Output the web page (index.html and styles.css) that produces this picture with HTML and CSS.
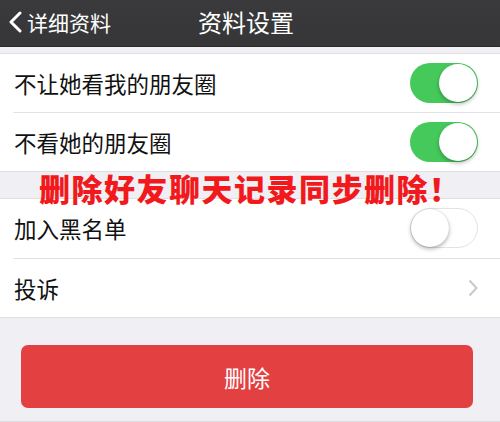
FILE: index.html
```html
<!DOCTYPE html>
<html lang="zh">
<head>
<meta charset="utf-8">
<link rel="stylesheet" href="styles.css">
</head>
<body>
<div class="page">
  <header class="nav">
    <div class="back">
      <svg class="back-icon" width="14" height="22" viewBox="0 0 14 22"><path d="M12 2 L3 11 L12 20" fill="none" stroke="#fff" stroke-width="3" stroke-linecap="round" stroke-linejoin="round"/></svg>
      <span>详细资料</span>
    </div>
    <div class="title">资料设置</div>
  </header>

  <div class="spacer-top"></div>

  <section class="group">
    <div class="row">
      <span class="label">不让她看我的朋友圈</span>
      <span class="switch on"><span class="knob"></span></span>
    </div>
    <div class="sep"></div>
    <div class="row">
      <span class="label">不看她的朋友圈</span>
      <span class="switch on"><span class="knob"></span></span>
    </div>
  </section>

  <div class="spacer-mid">
    <div class="overlay">删除好友聊天记录同步删除！</div>
  </div>

  <section class="group">
    <div class="row row2">
      <span class="label">加入黑名单</span>
      <span class="switch off"><span class="knob"></span></span>
    </div>
    <div class="sep"></div>
    <div class="row row2">
      <span class="label">投诉</span>
      <svg class="chev" width="10" height="18" viewBox="0 0 10 18"><path d="M1.5 1.5 L8.5 9 L1.5 16.5" fill="none" stroke="#c7c7cc" stroke-width="2"/></svg>
    </div>
  </section>

  <div class="bottom">
    <button class="delete">删除</button>
  </div>
</div>
</body>
</html>
```

FILE: styles.css
```css
html, body {
  margin: 0;
  padding: 0;
  background: #efeff4;
  font-family: "Noto Sans CJK SC", "Noto Sans", sans-serif;
}
.page {
  width: 500px;
  height: 422px;
  overflow: hidden;
  display: flex;
  flex-direction: column;
  background: #efeff4;
}
.nav {
  height: 47px;
  flex: none;
  background: linear-gradient(#3a3a3c, #363638);
  border-bottom: 1px solid #2a2a2c;
  box-sizing: border-box;
  display: flex;
  align-items: center;
  position: relative;
  color: #fff;
}
.back {
  display: flex;
  align-items: center;
  gap: 5px;
  padding-left: 8px;
  font-size: 21px;
  line-height: 1;
  margin-top: -2px;
}
.back-icon {
  flex: none;
}
.title {
  position: absolute;
  left: 0;
  right: 0;
  top: 0;
  bottom: 0;
  display: flex;
  align-items: center;
  justify-content: center;
  font-size: 24px;
  line-height: 1;
  margin-top: -3px;
  padding-right: 8px;
  pointer-events: none;
}
.spacer-top {
  height: 6px;
  flex: none;
}
.group {
  background: #fff;
  border-top: 1px solid #e0e0e4;
  border-bottom: 1px solid #e0e0e4;
  flex: none;
}
.row {
  height: 58px;
  display: flex;
  align-items: center;
  justify-content: space-between;
  padding: 0 22px 0 14px;
}
.row2 {
  height: 58.5px;
}
.label {
  font-size: 22.5px;
  color: #111;
  line-height: 1;
}
.sep {
  height: 1px;
  margin-left: 13px;
  background: #e2e2e6;
}
.switch {
  width: 68px;
  height: 40px;
  border-radius: 20px;
  box-sizing: border-box;
  position: relative;
  flex: none;
}
.switch.on {
  background: #45c95b;
}
.switch.off {
  background: #fff;
  border: 1.5px solid #e3e3e6;
}
.knob {
  position: absolute;
  width: 38px;
  height: 38px;
  border-radius: 50%;
  background: #fff;
  top: 1px;
  box-shadow: 0 2px 4px rgba(0,0,0,0.3);
}
.switch.on .knob {
  right: 1px;
}
.switch.off .knob {
  left: -0.5px;
  top: -0.5px;
  box-shadow: 0 2px 4px rgba(0,0,0,0.3), 0 0 1px rgba(0,0,0,0.2);
}
.spacer-mid {
  height: 26px;
  flex: none;
  position: relative;
}
.overlay {
  position: absolute;
  left: 39px;
  top: -1px;
  font-size: 31px;
  font-weight: 900;
  color: #f2191c;
  line-height: 34px;
  white-space: nowrap;
  letter-spacing: 1.5px;
  z-index: 2;
}
.chev {
  margin-right: 0;
}
.bottom {
  flex: 1;
  padding: 27px 27px 0 21px;
  border-bottom: 1px solid #dcdce0;
  box-sizing: border-box;
}
.delete {
  width: 100%;
  height: 63px;
  border: none;
  border-radius: 7px;
  background: #e34141;
  color: #fff;
  font-family: "Noto Sans CJK SC", "Noto Sans", sans-serif;
  font-size: 23px;
  padding: 0;
  display: block;
}
```
